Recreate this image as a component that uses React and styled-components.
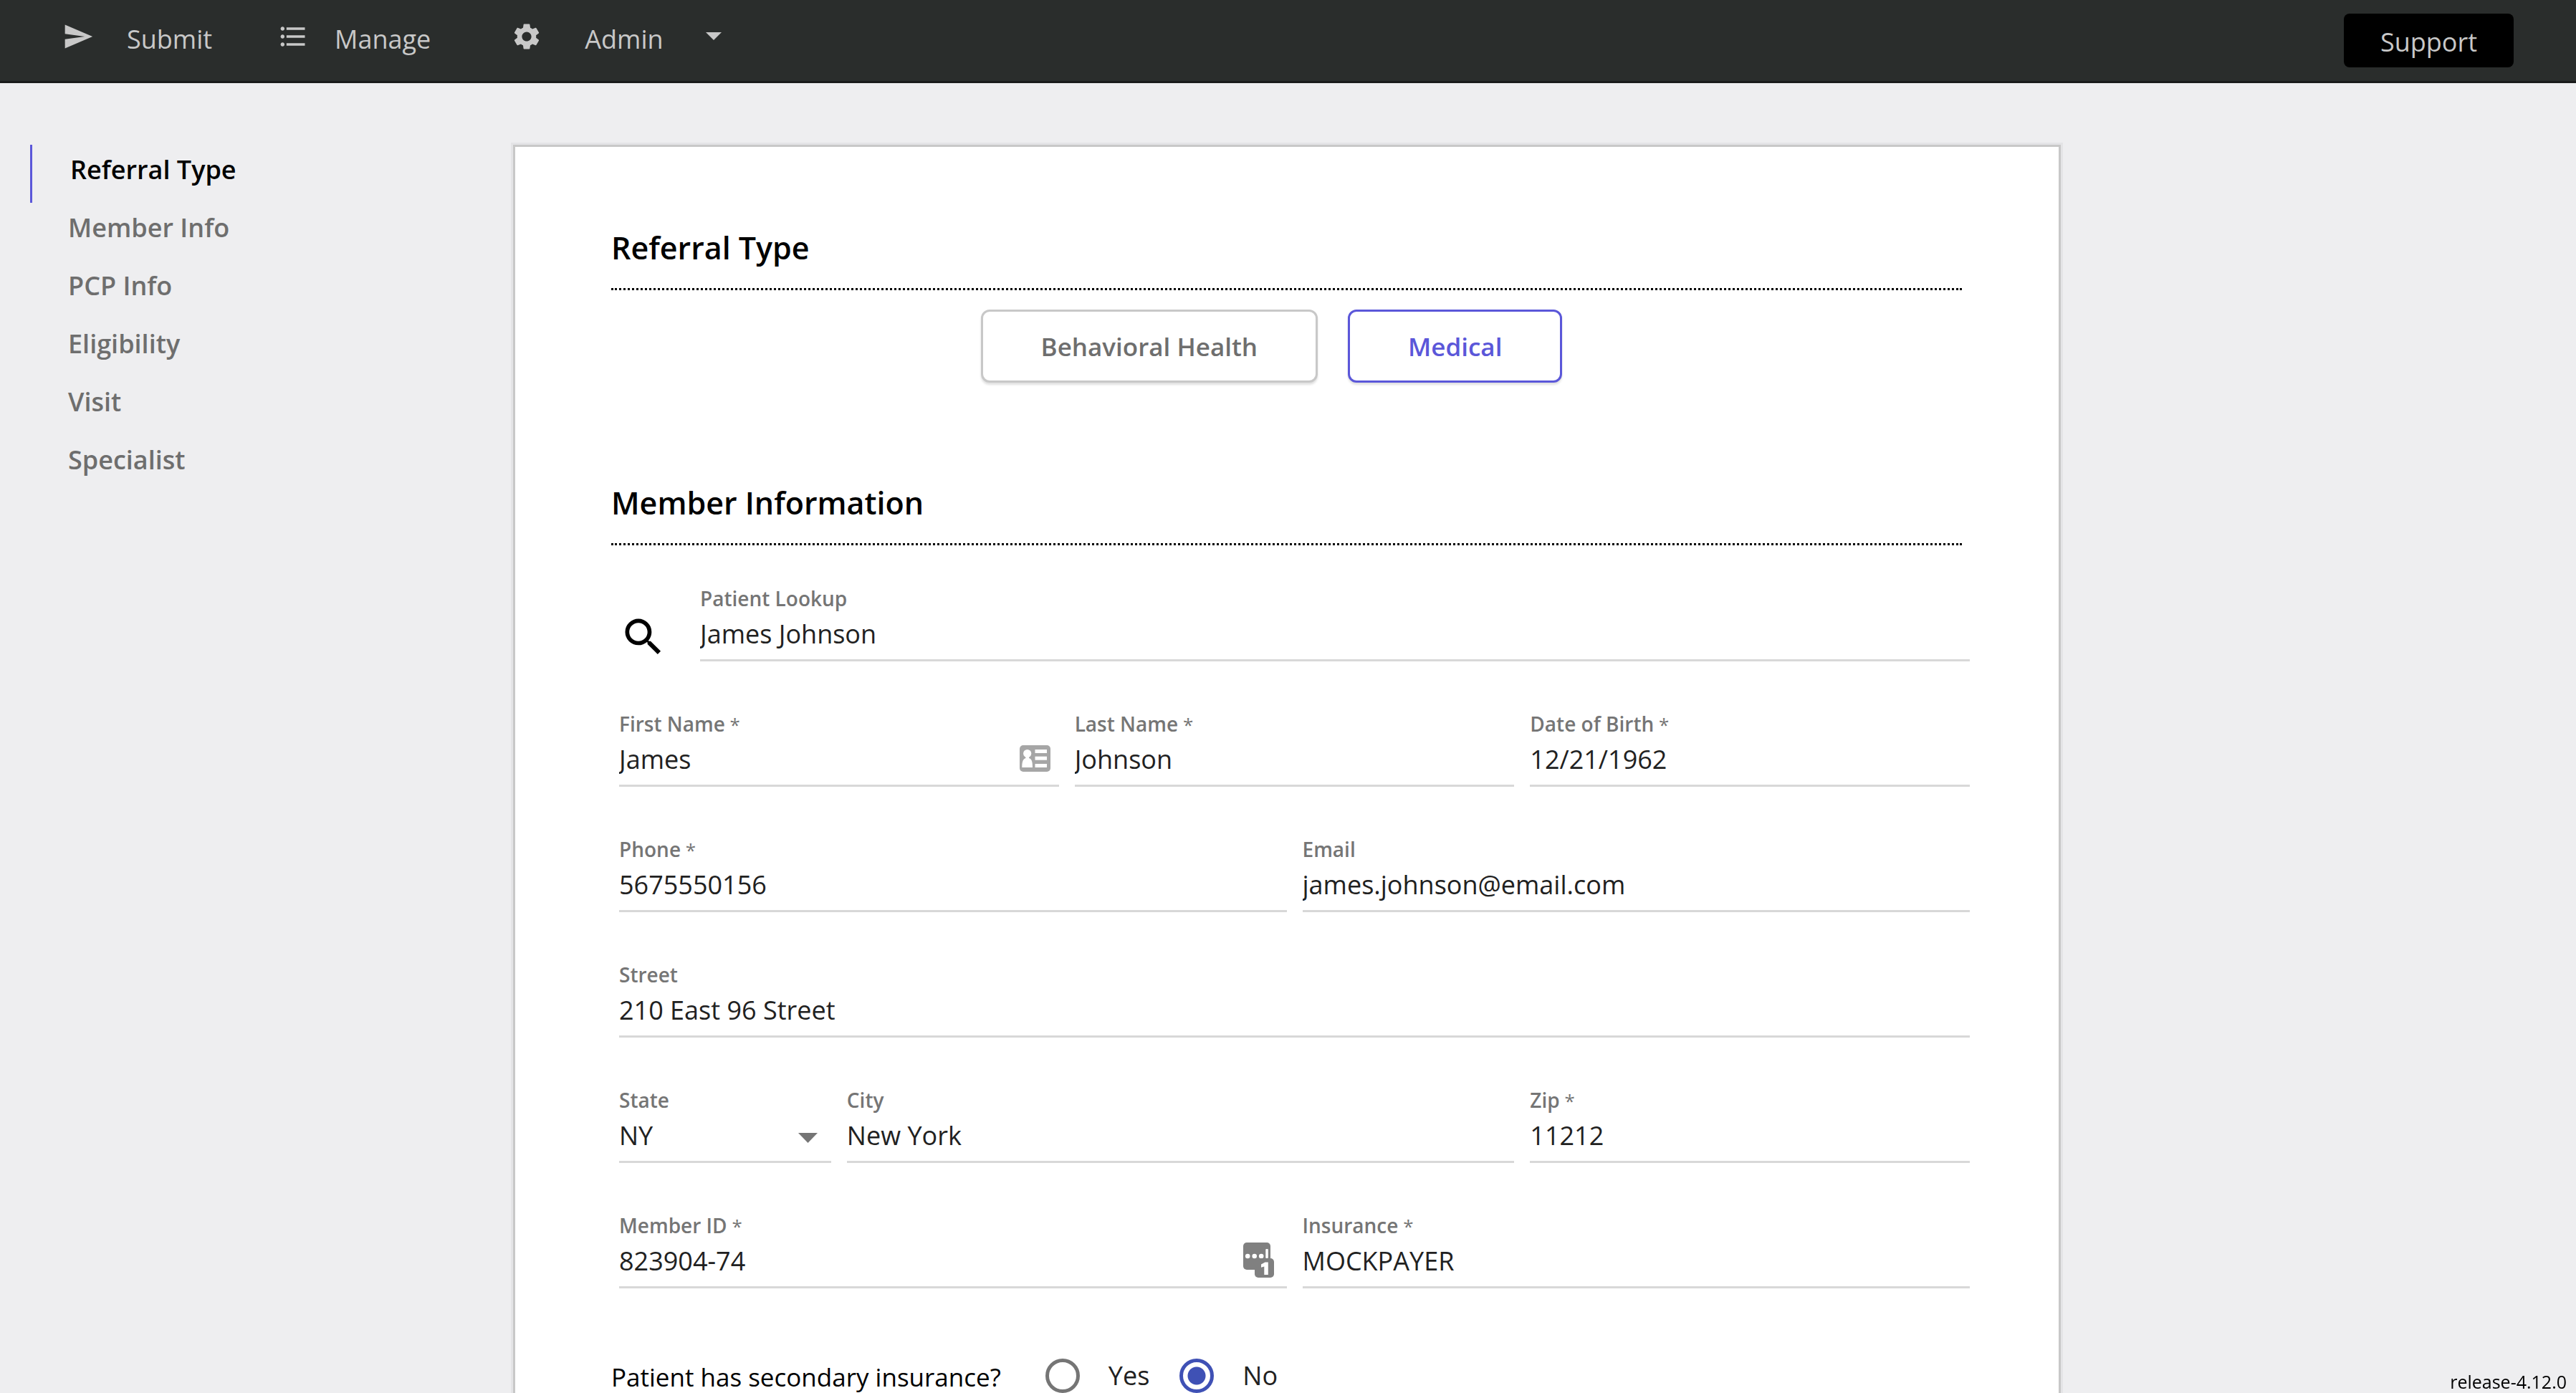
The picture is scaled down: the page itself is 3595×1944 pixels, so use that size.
import React, { useId } from "react";
import styled, { createGlobalStyle } from "styled-components";
import { MdFormatListBulleted, MdSearch, MdSend, MdSettings } from "react-icons/md";

const GlobalStyle = createGlobalStyle`
  *, *::before, *::after { box-sizing: border-box; }
  body {
    margin: 0;
    background: #eeeef0;
    color: #000;
    font-family: "Segoe UI", "Open Sans", "Noto Sans", sans-serif;
    font-size: 36px;
  }
  button, input, select { font: inherit; color: inherit; }
`;

const Page = styled.div`
  display: flex;
  flex-direction: column;
  height: 100vh;
`;

const Header = styled.header`
  display: flex;
  justify-content: space-between;
  align-items: flex-start;
  flex: none;
  height: 116px;
  padding: 0 87px;
  background: #2a2d2c;
  border-bottom: 3px solid #1a1b1b;
  color: #c8c8c8;
`;

const Nav = styled.nav`
  display: flex;
  gap: 91px;
  padding-top: 29px;
`;

const NavLink = styled.a`
  display: flex;
  align-items: flex-start;
  gap: ${(p) => p.$gap}px;
  margin-left: ${(p) => p.$lead || 0}px;
  color: inherit;
  line-height: 52px;
  text-decoration: none;

  svg { width: 44px; height: 44px; }
`;

const Caret = styled.span`
  margin-top: 16px;
  border: 11px solid transparent;
  border-top-color: currentColor;
  border-bottom: 0;
`;

const SupportButton = styled.button`
  height: 75px;
  margin-top: 19px;
  padding: 3px 51px 0;
  border: 0;
  border-radius: 8px;
  background: #000;
`;

const Body = styled.div`
  display: grid;
  grid-template-columns: 716px minmax(0, 1fr) 719px;
  flex: 1;
  min-height: 0;
  padding-top: 86px;
  overflow-y: auto;
  scrollbar-width: none;
`;

const SideNav = styled.nav`
  display: flex;
  flex-direction: column;
  padding-left: 42px;
`;

const SideLink = styled.a`
  height: 81px;
  padding-left: 53px;
  border-left: ${(p) => (p.$active ? "3px solid #5b57d9" : "0")};
  color: ${(p) => (p.$active ? "#000" : "#6e6e6e")};
  font-weight: 600;
  line-height: 69px;
  text-decoration: none;
`;

const Card = styled.main`
  align-self: start;
  padding: 111px 135px 160px 134px;
  border: 3px solid #c8c8c8;
  background: #fff;
  box-shadow: 0 0 0 3px #e4e4e6;
`;

const SectionTitle = styled.h2`
  margin: 0;
  padding-bottom: 26px;
  border-bottom: 3px dotted #000;
  font-size: 43px;
  font-weight: 600;
  line-height: 60px;
`;

const TypeChoices = styled.div`
  display: flex;
  justify-content: center;
  gap: 42px;
  padding: 27px 42px 138px 0;
`;

const TypeButton = styled.button`
  height: 102px;
  padding: 0 81px;
  border: 3px solid ${(p) => (p.$active ? "#5b57d9" : "#c8c8c8")};
  border-radius: 12px;
  background: #fff;
  box-shadow: 0 3px 3px rgba(0, 0, 0, 0.12);
  color: ${(p) => (p.$active ? "#5b57d9" : "#6e6e6e")};
  font-size: 35px;
  font-weight: 600;
`;

const Fields = styled.div`
  display: grid;
  grid-template-columns: repeat(6, minmax(0, 1fr));
  gap: 66px 22px;
  margin: 53px -11px 0 11px;
`;

const LookupRow = styled.div`
  display: flex;
  grid-column: 1 / -1;
  gap: 45px;

  > svg { flex: none; width: 68px; height: 68px; margin-top: 41px; }
`;

const FieldBox = styled.div`
  display: flex;
  flex: 1;
  flex-direction: column;
  grid-column: span ${(p) => p.$span};
`;

const FieldLabel = styled.label`
  height: 42px;
  color: #757575;
  font-size: 28px;
  font-weight: 600;
  line-height: 42px;

  span { font-size: 26px; font-weight: 400; line-height: 1; }
`;

const Control = styled.div`
  display: flex;
  align-items: center;
  position: relative;
  height: 67px;
  border-bottom: 3px solid #d8d8d8;

  input, select {
    flex: 1;
    min-width: 0;
    height: 64px;
    margin: 0 0 0 -6px;
    padding: 0 0 8px 6px;
    border: 0;
    outline: 0;
    appearance: none;
    background: transparent;
    color: #212121;
  }
`;

const IconSlot = styled.span`
  display: flex;
  position: absolute;
  right: ${(p) => p.$right}px;
  bottom: ${(p) => p.$bottom}px;
  pointer-events: none;
`;

const QuestionRow = styled.fieldset`
  display: flex;
  align-items: flex-start;
  margin: 97px 0 0;
  padding: 0;
  border: 0;
`;

const Question = styled.span`
  margin-right: 62px;
  font-size: 35px;
  line-height: 54px;
`;

const RadioLabel = styled.label`
  display: flex;
  align-items: center;
  gap: 40px;
  margin-right: 42px;
  color: #212121;
  line-height: 50px;
`;

const Radio = styled.input`
  width: 48px;
  height: 48px;
  margin: 0;
  border: 5px solid #757575;
  border-radius: 50%;
  appearance: none;

  &:checked {
    border-color: #3f51b5;
    background: radial-gradient(circle, #3f51b5 12px, transparent 13px);
  }
`;

const Release = styled.footer`
  position: fixed;
  right: 13px;
  bottom: 0;
  font-size: 25px;
  line-height: 32px;
`;

const ContactIcon = () => (
  <svg width="43" height="37" viewBox="0 0 43 37" aria-hidden="true">
    <rect width="43" height="37" rx="5" fill="#a6a6a6" />
    <g fill="#fff">
      <circle cx="10.700" cy="11.500" r="5.600" />
      <path d="M8 15h5.500l-.5 3c3.500 1 5 4 5 13H3.300c0-9 1.700-12 5.200-13z" />
      <rect x="21.500" y="6" width="16.500" height="5" />
      <rect x="21.500" y="15.700" width="16.500" height="5" />
      <rect x="21.500" y="26" width="16.500" height="5" />
    </g>
  </svg>
);

const PasswordIcon = () => (
  <svg width="43" height="49" viewBox="0 0 43 49" aria-hidden="true">
    <rect width="38" height="38" rx="5" fill="#808080" />
    <g fill="#fff">
      <circle cx="6.200" cy="19" r="3.300" />
      <circle cx="15.700" cy="19" r="3.300" />
      <circle cx="25.200" cy="19" r="3.300" />
      <rect x="31.300" y="9" width="3.500" height="13" rx="1" />
    </g>
    <rect x="16" y="22" width="27" height="27" rx="5" fill="#808080" />
    <path d="M30.500 27.500h4.300V45h-5.500V33.500l-4.300 1.300v-4.300z" fill="#fff" />
  </svg>
);

const SelectArrow = () => (
  <svg width="27" height="14" viewBox="0 0 27 14" aria-hidden="true">
    <path d="M0 0h27L13.500 14z" fill="#757575" />
  </svg>
);

function Field({ label, value, span = 2, required, icon, options }) {
  const id = useId();
  return (
    <FieldBox $span={span}>
      <FieldLabel htmlFor={id}>
        {label}
        {required && <span> *</span>}
      </FieldLabel>
      <Control>
        {options ? (
          <select id={id} defaultValue={value}>
            {options.map((o) => (
              <option key={o}>{o}</option>
            ))}
          </select>
        ) : (
          <input id={id} type="text" defaultValue={value} required={required} />
        )}
        {icon}
      </Control>
    </FieldBox>
  );
}

const sections = ["Referral Type", "Member Info", "PCP Info", "Eligibility", "Visit", "Specialist"];

export default function App() {
  return (
    <>
      <GlobalStyle />
      <Page>
        <Header>
          <Nav aria-label="Main">
            <NavLink href="#submit" $gap={46}><MdSend />Submit</NavLink>
            <NavLink href="#manage" $gap={36}><MdFormatListBulleted />Manage</NavLink>
            <NavLink href="#admin" $gap={59} $lead={21}><MdSettings />Admin<Caret /></NavLink>
          </Nav>
          <SupportButton type="button">Support</SupportButton>
        </Header>
        <Body>
          <SideNav aria-label="Sections">
            {sections.map((s, i) => (
              <SideLink key={s} href="#section" $active={i === 0}>{s}</SideLink>
            ))}
          </SideNav>
          <Card>
            <SectionTitle>Referral Type</SectionTitle>
            <TypeChoices>
              <TypeButton type="button">Behavioral Health</TypeButton>
              <TypeButton type="button" $active>Medical</TypeButton>
            </TypeChoices>
            <SectionTitle>Member Information</SectionTitle>
            <Fields>
              <LookupRow>
                <MdSearch />
                <Field label="Patient Lookup" value="James Johnson" />
              </LookupRow>
              <Field label="First Name" value="James" required icon={<IconSlot $right={12} $bottom={18}><ContactIcon /></IconSlot>} />
              <Field label="Last Name" value="Johnson" required />
              <Field label="Date of Birth" value="12/21/1962" required />
              <Field label="Phone" value="5675550156" span={3} required />
              <Field label="Email" value="james.johnson@email.com" span={3} />
              <Field label="Street" value="210 East 96 Street" span={6} />
              <Field label="State" value="NY" span={1} options={["NY", "NJ", "CT"]} icon={<IconSlot $right={19} $bottom={25}><SelectArrow /></IconSlot>} />
              <Field label="City" value="New York" span={3} />
              <Field label="Zip" value="11212" required />
              <Field label="Member ID" value="823904-74" span={3} required icon={<IconSlot $right={18} $bottom={12}><PasswordIcon /></IconSlot>} />
              <Field label="Insurance" value="MOCKPAYER" span={3} required />
            </Fields>
            <QuestionRow>
              <Question>Patient has secondary insurance?</Question>
              <RadioLabel><Radio type="radio" name="secondary" />Yes</RadioLabel>
              <RadioLabel><Radio type="radio" name="secondary" defaultChecked />No</RadioLabel>
            </QuestionRow>
          </Card>
        </Body>
        <Release>release-4.12.0</Release>
      </Page>
    </>
  );
}
